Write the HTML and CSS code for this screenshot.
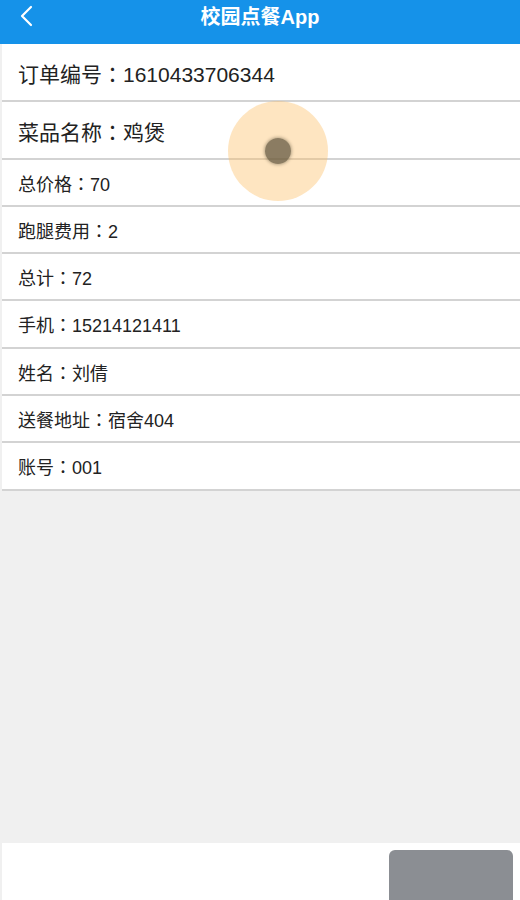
FILE: index.html
```html
<!DOCTYPE html>
<html lang="zh-CN">
<head>
  <meta charset="UTF-8">
  <meta name="viewport" content="width=device-width, initial-scale=1.0">
  <title>订单详情</title>
  <link rel="stylesheet" href="styles.css">
</head>
<body>
  <header class="topbar">
    <a class="back" href="#">
      <svg width="14" height="22" viewBox="0 0 14 22">
        <polyline points="12,2 3,11 12,20" fill="none" stroke="#fff" stroke-width="2.2" stroke-linecap="round" stroke-linejoin="round"/>
      </svg>
    </a>
    <h1>校园点餐App</h1>
  </header>

  <main class="content">
    <ul class="detail-list">
      <li class="big">订单编号<span class="sep" lang="zh-TW">：</span>1610433706344</li>
      <li class="big">菜品名称<span class="sep" lang="zh-TW">：</span>鸡煲</li>
      <li>总价格<span class="sep" lang="zh-TW">：</span>70</li>
      <li>跑腿费用<span class="sep" lang="zh-TW">：</span>2</li>
      <li>总计<span class="sep" lang="zh-TW">：</span>72</li>
      <li>手机<span class="sep" lang="zh-TW">：</span>15214121411</li>
      <li>姓名<span class="sep" lang="zh-TW">：</span>刘倩</li>
      <li>送餐地址<span class="sep" lang="zh-TW">：</span>宿舍404</li>
      <li>账号<span class="sep" lang="zh-TW">：</span>001</li>
    </ul>
  </main>

  <footer class="bottombar">
    <button class="action" type="button"></button>
  </footer>

  <!-- touch indicator from the screen recording -->
  <div class="touch"><span></span></div>
</body>
</html>
```

FILE: styles.css
```css
html, body {
  height: 100%;
}

body {
  margin: 0;
  font-family: "Liberation Sans", "Noto Sans CJK SC", sans-serif;
  color: #222;
  background-color: #f0f0f0;
  display: flex;
  flex-direction: column;
  overflow: hidden;
}

.topbar {
  position: relative;
  height: 44px;
  background-color: #1592e9;
  color: #fff;
  text-align: center;
  flex-shrink: 0;
}

.topbar h1 {
  margin: 0;
  font-size: 20px;
  font-weight: bold;
  line-height: 35px;
}

.back {
  position: absolute;
  left: 19px;
  top: 5px;
  display: block;
  width: 14px;
  height: 22px;
}

.content {
  flex: 1;
}

.detail-list {
  list-style: none;
  margin: 0 0 0 2px;
  padding: 0;
  background-color: #fff;
}

.detail-list li {
  height: 45.3px;
  line-height: 46px;
  padding-left: 16px;
  font-size: 18px;
  border-bottom: 2px solid #d3d3d3;
}

.detail-list li.big {
  height: 55.8px;
  line-height: 58px;
  font-size: 21px;
}

/* centred full-width colon */
.sep {
  font-family: "Noto Sans CJK TC", sans-serif;
}

.bottombar {
  height: 57px;
  margin-left: 2px;
  background-color: #fff;
  display: flex;
  justify-content: flex-end;
  align-items: flex-start;
  padding: 7px 7px 0 0;
  box-sizing: border-box;
  flex-shrink: 0;
}

.action {
  width: 124px;
  height: 56px;
  border: none;
  border-radius: 6px;
  background-color: #8b8e93;
}

.touch {
  position: absolute;
  left: 228px;
  top: 101px;
  width: 100px;
  height: 100px;
  border-radius: 50%;
  background-color: rgba(252, 190, 100, 0.4);
  display: flex;
  justify-content: center;
  align-items: center;
}

.touch span {
  width: 26px;
  height: 26px;
  border-radius: 50%;
  background-color: rgba(90, 80, 57, 0.7);
  box-shadow: 0 0 3px 1px rgba(90, 80, 57, 0.4);
}
```
